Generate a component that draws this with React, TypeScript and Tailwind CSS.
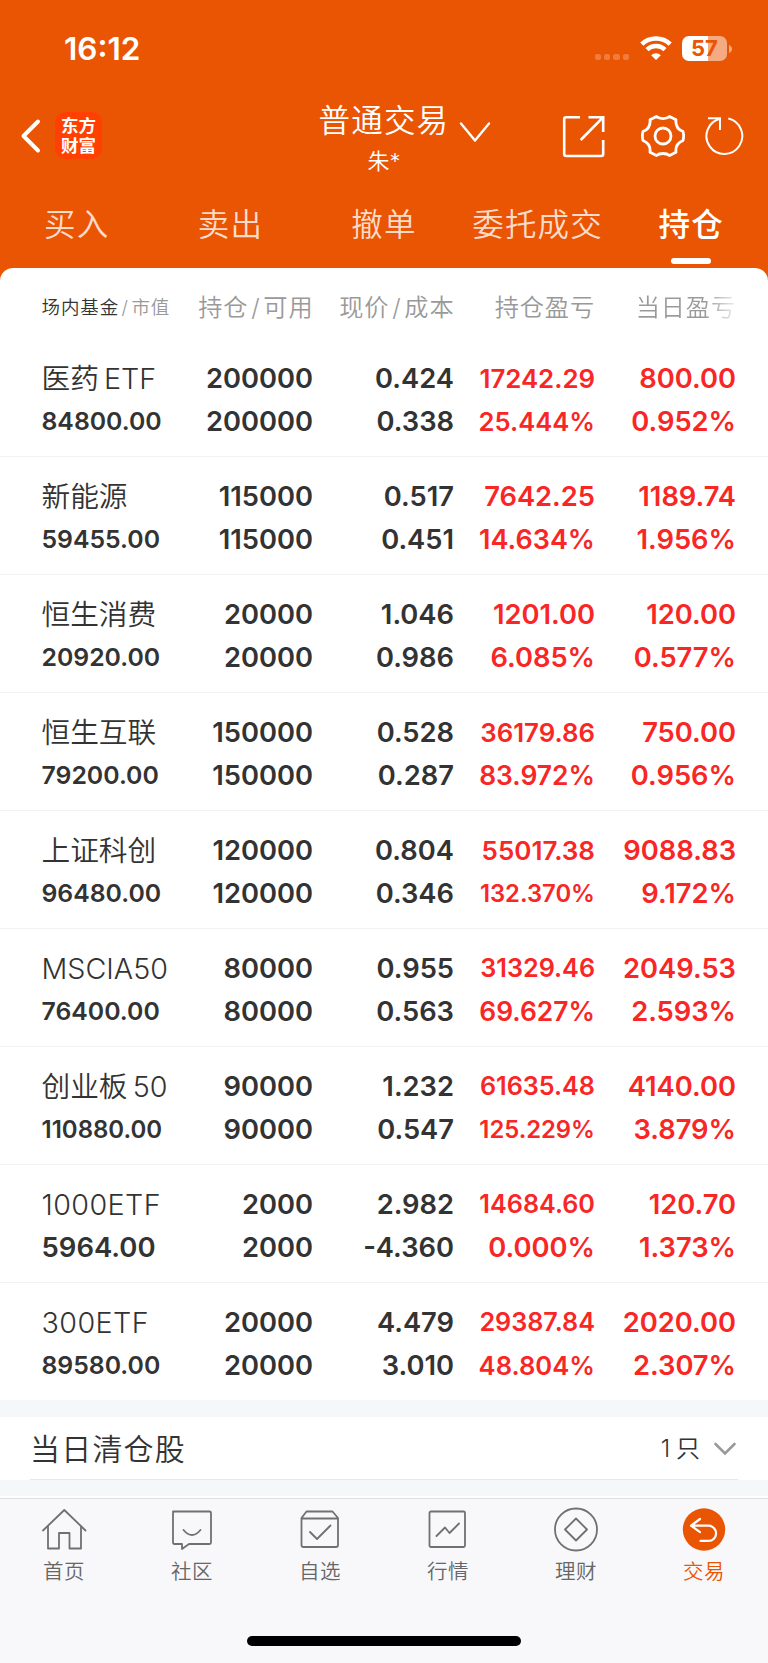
import React from "react";

type Cell = { text: string; size: string };
type Row = { name: string; value: string; hold: [string, string]; price: [string, string]; profit: [string, string]; today: [string, string] };

const rows: Row[] = [
  { name: "医药 ETF", value: "84800.00", hold: ["200000", "200000"], price: ["0.424", "0.338"], profit: ["17242.29", "25.444%"], today: ["800.00", "0.952%"] },
  { name: "新能源", value: "59455.00", hold: ["115000", "115000"], price: ["0.517", "0.451"], profit: ["7642.25", "14.634%"], today: ["1189.74", "1.956%"] },
  { name: "恒生消费", value: "20920.00", hold: ["20000", "20000"], price: ["1.046", "0.986"], profit: ["1201.00", "6.085%"], today: ["120.00", "0.577%"] },
  { name: "恒生互联", value: "79200.00", hold: ["150000", "150000"], price: ["0.528", "0.287"], profit: ["36179.86", "83.972%"], today: ["750.00", "0.956%"] },
  { name: "上证科创", value: "96480.00", hold: ["120000", "120000"], price: ["0.804", "0.346"], profit: ["55017.38", "132.370%"], today: ["9088.83", "9.172%"] },
  { name: "MSCIA50", value: "76400.00", hold: ["80000", "80000"], price: ["0.955", "0.563"], profit: ["31329.46", "69.627%"], today: ["2049.53", "2.593%"] },
  { name: "创业板 50", value: "110880.00", hold: ["90000", "90000"], price: ["1.232", "0.547"], profit: ["61635.48", "125.229%"], today: ["4140.00", "3.879%"] },
  { name: "1000ETF", value: "5964.00", hold: ["2000", "2000"], price: ["2.982", "-4.360"], profit: ["14684.60", "0.000%"], today: ["120.70", "1.373%"] },
  { name: "300ETF", value: "89580.00", hold: ["20000", "20000"], price: ["4.479", "3.010"], profit: ["29387.84", "48.804%"], today: ["2020.00", "2.307%"] },
];

const valueSize: Record<number, string> = { 7: "text-[27.5px]", 8: "text-[24.8px]", 9: "text-[24px]" };

const profitSizes: Record<string, string> = {
  "25.444%": "text-[25.6px]",
  "48.804%": "text-[25.6px]",
  "14.634%": "text-[27px]",
  "83.972%": "text-[26.4px]",
  "69.627%": "text-[26.4px]",
  "17242.29": "text-[25.8px]",
  "36179.86": "text-[25.8px]",
  "55017.38": "text-[26px]",
  "31329.46": "text-[25.2px]",
  "61635.48": "text-[25.2px]",
  "14684.60": "text-[25.2px]",
  "29387.84": "text-[25.2px]",
  "132.370%": "text-[23.8px]",
  "125.229%": "text-[23.8px]",
};

const profitSize = (text: string): string => profitSizes[text] ?? "text-[27.3px]";

function Pair({ cells, className }: { cells: [Cell, Cell]; className: string }) {
  return (
    <div className={`flex flex-col items-end font-[570] ${className}`}>
      {cells.map((c, i) => (
        <span key={i} className={`h-[43px] whitespace-nowrap leading-[43px] ${c.size}`}>{c.text}</span>
      ))}
    </div>
  );
}

const plain = (t: [string, string]): [Cell, Cell] => [{ text: t[0], size: "text-[27.3px]" }, { text: t[1], size: "text-[27.3px]" }];

const tabs = ["买入", "卖出", "撤单", "委托成交", "持仓"];

function StatusBar() {
  return (
    <div className="flex h-[98px] items-start justify-between pl-[64px] pr-[36.5px] text-white">
      <span className="mt-[29px] text-[31.5px] font-semibold leading-[40px]">16:12</span>
      <div className="mt-[36px] flex items-start">
        <div className="mr-[10.5px] mt-[18px] flex gap-[3px]">
          {[0, 1, 2, 3].map((i) => (
            <span key={i} className="h-[6px] w-[6.3px] rounded-[2px] bg-[#f07c3c]" />
          ))}
        </div>
        <svg className="mr-[10.5px]" width="32" height="25" viewBox="0 0 32 25" fill="none" stroke="#fff">
          <path d="M1.8 8.2A20.5 20.5 0 0 1 30.2 8.2" strokeWidth="4.6" />
          <path d="M7 13.6A13 13 0 0 1 25 13.6" strokeWidth="4.4" />
          <path d="M16 24L11.2 19.2A6.8 6.8 0 0 1 20.8 19.2Z" fill="#fff" stroke="none" />
        </svg>
        <div className="flex items-center">
          <div className="flex h-[25px] w-[45px] items-center justify-center rounded-[7px] bg-[linear-gradient(90deg,#fff_58%,#f5ab82_58%)] text-[22px] font-bold leading-[25px] text-[#ea5504]">57</div>
          <svg className="ml-[1.5px]" width="3" height="8" viewBox="0 0 3 8"><path d="M0 0C4 1.5 4 6.5 0 8Z" fill="#f5ab82" /></svg>
        </div>
      </div>
    </div>
  );
}

function TitleBar() {
  return (
    <div className="grid h-[87px] grid-cols-[318.5px_179.5px_270px]">
      <div className="flex items-start pl-[20px]">
        <svg className="mt-[20px]" width="22" height="36" viewBox="0 0 22 36" fill="none" stroke="#fff" strokeWidth="4" strokeLinecap="round" strokeLinejoin="round">
          <path d="M18 3.5L3.5 18L18 32.5" />
        </svg>
        <div className="ml-[13px] mt-[14px] flex h-[47px] w-[47px] flex-col items-center justify-center rounded-[10px] bg-[#ff4000] text-[17.500px] font-bold leading-[19.500px] text-white">
          <span>东方</span>
          <span>财富</span>
        </div>
      </div>
      <div>
        <div className="flex items-center">
          <span className="h-[44px] whitespace-nowrap text-[31.500px] font-[350] leading-[43px] tracking-[1.2px] text-white">普通交易</span>
          <svg className="ml-[9.500px] mt-[23px] shrink-0" width="32" height="22" viewBox="0 0 32 22" fill="none" stroke="#fff" strokeWidth="2.4" strokeLinecap="round" strokeLinejoin="round">
            <path d="M2 2.5L16 19.5L30 2.5" />
          </svg>
        </div>
        <div className="-mt-[2px] w-[131px] text-center text-[22px] font-[350] leading-[40px] text-white">朱*</div>
      </div>
      <div className="flex items-start">
        <svg className="ml-[64px] mt-[17px]" width="44" height="44" viewBox="0 0 44 44" fill="none" stroke="#fff" strokeWidth="2.600">
          <path d="M18 2.2H4.2Q2.2 2.2 2.2 4.2V39Q2.2 41 4.2 41H39.2Q41.2 41 41.2 39V25M26.500 2.2H41.2V17M41 2.4L18.700 25" />
        </svg>
        <svg className="ml-[34.500px] mt-[17px]" width="44" height="42" viewBox="0 0 44 42" fill="none" stroke="#fff" strokeWidth="2.800" strokeLinejoin="round">
          <path d="M15.500 1.500C18.500 4.200 25.500 4.200 28.500 1.500L35 4.800C34.300 11 37 14.500 42 16.500Q43.200 21 42 25.500C37 27.500 34.300 31 35 37.200L28.500 40.500C25.500 37.800 18.500 37.800 15.500 40.500L9 37.200C9.700 31 7 27.500 2 25.500Q0.800 21 2 16.500C7 14.500 9.700 11 9 4.800Z" />
          <circle cx="22" cy="21" r="8" />
        </svg>
        <svg className="ml-[20.500px] mt-[17px]" width="40" height="42" viewBox="0 0 40 42" fill="none" stroke="#fff" strokeWidth="2">
          <path d="M23.300 3.600A17.900 17.900 0 1 1 15 3.700" />
          <path d="M3 3.200H15V15" />
        </svg>
      </div>
    </div>
  );
}

function Tabs() {
  return (
    <div className="grid h-[83px] grid-cols-5">
      {tabs.map((t, i) => (
        <div key={t} className="flex flex-col items-center">
          <span className={`mt-[17px] h-[46px] whitespace-nowrap text-[31.500px] leading-[46px] tracking-[1.2px] ${i === 4 ? "font-medium text-white" : "font-[350] text-[#fbdccb]"}`}>{t}</span>
          {i === 4 && <span className="mt-[10px] h-[6px] w-[40px] rounded-full bg-white" />}
        </div>
      ))}
    </div>
  );
}

const nav = [
  { label: "首页", icon: (<><path d="M2 22.500L23.300 2L44.500 22.500" /><path d="M7 18.500V40.500H18V25H28.500V40.500H40V18.500" /></>) },
  { label: "社区", icon: (<><path d="M4 3.500H40.500Q42 3.500 42 5V34.500Q42 36 40.500 36H20L13 41V36H5.500Q4 36 4 34.500V5Q4 3.500 5.500 3.500" /><path d="M14.500 22Q23 32 31.500 22" /></>) },
  { label: "自选", icon: (<><path d="M9.500 3.500H35.500L41 10V37Q41 39 39 39H6.500Q4.500 39 4.500 37V10ZM4.500 10.500H41" /><path d="M13 24L20 31L33.500 17.500" /></>) },
  { label: "行情", icon: (<><rect x="4.500" y="3.500" width="35.500" height="35.500" rx="1.500" /><path d="M11.500 28L20 19.500L24.500 25L34 15.500" /></>) },
  { label: "理财", icon: (<><circle cx="23" cy="21.500" r="21" /><path d="M23 10.500L34 21.500L23 32.500L12 21.500Z" /></>) },
  { label: "交易", icon: (<><circle cx="23" cy="21.500" r="21.200" fill="#ea5504" stroke="none" /><path stroke="#fff" strokeWidth="2.200" d="M19 11L10 17.700L19 24.200M10.500 17.700H27.500A7.600 7.600 0 0 1 27.500 32.900H19.500" /></>) },
];

export default function App() {
  return (
    <div className="h-[1663px] w-[768px] overflow-hidden bg-[#ea5504] font-[Inter,'Noto_Sans_CJK_SC',sans-serif] text-[#333]">
      <StatusBar />
      <TitleBar />
      <Tabs />
      <main className="rounded-t-[13px] bg-white">
        <div className="grid h-[71px] grid-cols-[162px_151.500px_141px_140.500px_141px] items-center pt-[9px] font-[350] tracking-[0.9px] text-[#999]">
          <div className="whitespace-nowrap pb-[1px] pl-[41.500px] text-[18.500px]"><span className="text-[#333]">场内基金</span><span className="mx-[2.500px]">/</span>市值</div>
          <div className="whitespace-nowrap text-right text-[24.200px]">持仓<span className="mx-[2.800px]">/</span>可用</div>
          <div className="whitespace-nowrap text-right text-[24.200px]">现价<span className="mx-[2.800px]">/</span>成本</div>
          <div className="whitespace-nowrap text-right text-[24.200px]">持仓盈亏</div>
          <div className="whitespace-nowrap bg-[linear-gradient(90deg,#999_78%,#eee)] bg-clip-text text-right text-[24.200px] text-transparent">当日盈亏</div>
        </div>
        {rows.map((r) => (
          <div key={r.name} className="grid h-[118px] grid-cols-[172px_141px_141px_141px_141px] border-b border-[#f2f2f2] pt-[18px] last:h-[117px] last:border-b-0">
            <div className="flex flex-col pl-[41.500px]">
              <span className={`h-[43px] whitespace-nowrap text-[28.700px] font-[350] leading-[43px] [word-spacing:-3px] ${r.name.endsWith("0ETF") ? "tracking-[0.400px]" : ""}`}>{r.name}</span>
              <span className={`h-[43px] font-[570] leading-[43px] ${valueSize[r.value.length]}`}>{r.value}</span>
            </div>
            <Pair cells={plain(r.hold)} className="" />
            <Pair cells={plain(r.price)} className="" />
            <Pair cells={[{ text: r.profit[0], size: profitSize(r.profit[0]) }, { text: r.profit[1], size: profitSize(r.profit[1]) }]} className="text-[#f92626]" />
            <Pair cells={plain(r.today)} className="text-[#f92626]" />
          </div>
        ))}
      </main>
      <div className="h-[17px] bg-[#f6f7f9]" />
      <div className="h-[63px] bg-white px-[30px]">
        <div className="flex h-[63px] items-center justify-between border-b border-[#e8e8e8] pt-[2px]">
          <span className="text-[30px] font-[350] tracking-[1.200px]">当日清仓股</span>
          <div className="flex items-center pr-[1.500px]">
            <span className="text-[24px] font-[350] [word-spacing:-1px]">1 只</span>
            <svg className="ml-[12.500px]" width="24" height="16" viewBox="0 0 24 16" fill="none" stroke="#999" strokeWidth="2.600" strokeLinecap="round"><path d="M2.500 3L12 12.500L21.500 3" /></svg>
          </div>
        </div>
      </div>
      <div className="h-[16px] bg-[#f6f7f9]" />
      <div className="h-[2px] bg-white" />
      <nav className="flex h-[165px] flex-col items-center border-t border-[#dedee0] bg-[#f8f8fb]">
        <div className="grid w-full grid-cols-6">
          {nav.map((n, i) => (
            <div key={n.label} className={`flex flex-col items-center ${i === 5 ? "text-[#ea5504]" : "text-[#666]"}`}>
              <svg className="mr-[1px] mt-[9px] shrink-0 overflow-visible" width="45" height="44" viewBox="0 0 45 44" fill="none" stroke={i === 5 ? "#ea5504" : "#707070"} strokeWidth="1.800" strokeLinejoin="round" strokeLinecap="round">{n.icon}</svg>
              <span className="mt-[4px] text-[20.500px] font-[350] leading-[32px] tracking-[0.500px]">{n.label}</span>
            </div>
          ))}
        </div>
        <div className="mt-[48px] h-[10px] w-[274px] rounded-full bg-black" />
      </nav>
    </div>
  );
}
